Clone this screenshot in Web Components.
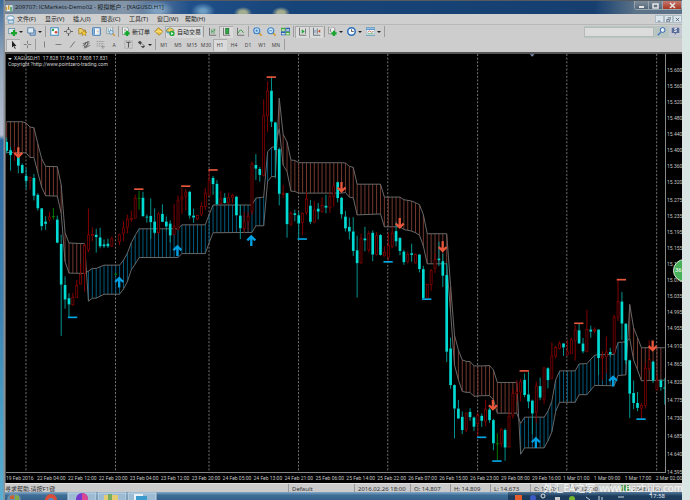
<!DOCTYPE html>
<html lang="zh-CN">
<head>
<meta charset="utf-8">
<title>ICMarkets-Demo02 - XAGUSD,H1</title>
<style>
html,body{height:100%;margin:0}
body{background:#d9e5e2;font-family:"Noto Sans","Noto Sans CJK SC",sans-serif;overflow:hidden}
</style>
</head>
<body>
<trading-desktop></trading-desktop>
<script>
const ICONS = {
app:'<rect x="1" y="3" width="9" height="8" fill="#e8f0f8"/><path d="M2 5v5M5 3v6" stroke="#c93" stroke-width="2"/><path d="M8 5v6" stroke="#3a9a4a" stroke-width="2"/>',
menuapp:'<ellipse cx="6" cy="4" rx="5" ry="3" fill="#e6f0fa" stroke="#4a88b8"/><path d="M3 7h7v4H3z" fill="#cfe2f2" stroke="#5a90b8"/>',
newchart:'<rect x="1" y="2" width="8" height="7" fill="#dfeaf2" stroke="#5f8a9a"/><path d="M8 4v8M4 8h8" stroke="#18a32a" stroke-width="3"/>',
profiles:'<path d="M4 4h7v7H4z" fill="#a9c6e4" stroke="#3d6a98"/><path d="M1 1h8v7H1z" fill="#e2ecf6" stroke="#3d6a98"/>',
market:'<rect x="1" y="1" width="10" height="10" fill="#fff" stroke="#4c93c8" stroke-width="1.5"/><circle cx="4" cy="4" r="1.6" fill="#2a9d45"/><circle cx="8" cy="7" r="1.8" fill="#d5482e"/>',
target:'<circle cx="6" cy="6" r="3" fill="none" stroke="#888" stroke-width="1.3"/><path d="M6 0v4M6 8v4M0 6h4M8 6h4" stroke="#666" stroke-width="1.6"/>',
star:'<path d="M1 2h4l1 2h4v5H1z" fill="#edd06a" stroke="#a07a22"/><path d="M8 4l1 3h3l-2.300 1.600 1 3L8 10l-2.700 1.600 1-3L4 7h3z" fill="#ffd83c" stroke="#a07a22" stroke-width=".7"/>',
panel:'<rect x="1" y="1" width="10" height="10" rx="1" fill="#fff" stroke="#3979b5" stroke-width="1.5"/><path d="M2 2h2v8H2z" fill="#5792cb"/><path d="M6 4h4M6 6h4M6 8h4" stroke="#bbb"/>',
tester:'<rect x="1" y="0" width="8" height="9" fill="#e9ede9" stroke="#8a9a9a"/><path d="M3 2v5M6 2v3" stroke="#5895c4"/><circle cx="7" cy="7" r="2.500" fill="#cfe5f5" stroke="#4887b8"/><path d="M9 9l3 3" stroke="#d29632" stroke-width="2"/>',
order:'<path d="M2 0h6l2 3v7H2z" fill="#f3f5f3" stroke="#7c8a80"/><path d="M4 3h3M4 5h3" stroke="#888"/><path d="M8 5v7M4.500 8.500h7" stroke="#12a82b" stroke-width="3"/>',
diamond:'<path d="M1 6l5-5 6 5-5 5z" fill="#efc648" stroke="#9a701c"/><path d="M2 7l4-2 5 2" fill="none" stroke="#fff0a8"/>',
auto:'<ellipse cx="5" cy="5" rx="5" ry="4" fill="#60a8cb"/><path d="M0 5l5-4 6 3-5 3z" fill="#f0cf58" stroke="#877528" stroke-width=".6"/><circle cx="8" cy="8.500" r="3.500" fill="#22a83b"/><path d="M7 6.500v4l3-2z" fill="#fff"/>',
bars:'<path d="M2 1v10h9" fill="none" stroke="#555"/><path d="M5 3v6M8 2v7M5 6h2M8 4h2" stroke="#2d9a41"/>',
candle:'<path d="M2 1v10h9" fill="none" stroke="#555"/><rect x="5" y="2" width="4" height="7" fill="#32a849" stroke="#167329"/>',
line:'<path d="M2 1v10h9" fill="none" stroke="#555"/><path d="M3 8q3-8 7 0" fill="none" stroke="#31a448" stroke-width="1.300"/>',
zoomin:'<path d="M8 8l4 4" stroke="#d5a038" stroke-width="2.500"/><circle cx="5" cy="5" r="4" fill="#d1e8fa" stroke="#3c82c4" stroke-width="1.500"/><path d="M3 5h4M5 3v4" stroke="#2872b8"/>',
zoomout:'<path d="M8 8l4 4" stroke="#d5a038" stroke-width="2.500"/><circle cx="5" cy="5" r="4" fill="#d1e8fa" stroke="#3c82c4" stroke-width="1.500"/><path d="M3 5h4" stroke="#2872b8"/>',
tiles:'<path d="M0 1h6v5H0zM6 6h6v5H6z" fill="#44a834"/><path d="M6 1h6v5H6zM0 6h6v5H0z" fill="#2b61bd"/><path d="M1 3h4v2H1zM7 3h4v2H7zM1 8h4v2H1zM7 8h4v2H7z" fill="#d9eadb"/>',
scroll:'<path d="M2 1v10h9M10 2v7" fill="none" stroke="#555"/><path d="M5 3v6l4-3z" fill="#22a83b"/>',
shift:'<path d="M2 1v10h9M7 2v7" fill="none" stroke="#456"/><path d="M11 3v5L8 5.500z" fill="#cb4d30"/><path d="M4 4v4" stroke="#47a"/>',
indicator:'<path d="M1 0h6l2 2v7H1z" fill="#eef0ee" stroke="#777"/><path d="M4 2q-2 2 0 5" stroke="#555" fill="none"/><path d="M8 5v7M4.500 8.500h7" stroke="#16a52d" stroke-width="3"/>',
clock:'<circle cx="6" cy="6" r="5" fill="#f4f9fd" stroke="#2a6fb8" stroke-width="2"/><path d="M6 3v3h3" fill="none" stroke="#333"/>',
template:'<rect x="0" y="1" width="12" height="10" fill="#edf3f8" stroke="#4c86b5"/><path d="M0 2h12v2H0z" fill="#599bd0"/><path d="M2 7l3-2 2 2 3-1" stroke="#cb5b44" fill="none"/><path d="M2 9h8" stroke="#3fa354"/>',
cursor:'<path d="M4 1v9l2-2 2 4 1-1-2-3h3z" fill="#222"/>',
cross:'<path d="M6 1v4M6 7v4M1 6h4M7 6h4" stroke="#666"/>',
vline:'<path d="M6 2v8" stroke="#666"/>',
hline:'<path d="M2 6h8" stroke="#666"/>',
trend:'<path d="M3 10l6-8" stroke="#555"/>',
channel:'<path d="M1 8l7-6M3 10l7-6M1 5l9-3M3 11l8-4M5 3l-2 7M8 3l-2 7" stroke="#555"/>',
fibo:'<path d="M1 2h10M1 5h10M1 8h7" stroke="#888" stroke-dasharray="2 1"/><path d="M9 7v5M7 9h5" stroke="#888"/>',
label:'<rect x="1" y="1" width="10" height="10" fill="none" stroke="#888" stroke-dasharray="1 1"/><path d="M3 3h6M6 3v7" stroke="#555" stroke-width="1.400"/>',
arrows:'<path d="M1 3l3-2 3 3-2 1v2L3 5z M5 8h6l-3 3z" fill="#444"/><path d="M7 5l3 3" stroke="#444"/>',
search:'<circle cx="7.500" cy="4" r="3.200" fill="#e8f2fa" stroke="#2f62b0" stroke-width="1.300"/><path d="M5 7l-4 4" stroke="#4b7abc" stroke-width="2"/>',
chat:'<path d="M1 1h10v7H7l-2 3V8H1z" fill="#596c98"/><path d="M8 2H5v2h2v2H4" fill="none" stroke="#fff"/>'
};
function build(host, css, html){
  const root = host.attachShadow({mode:'open'});
  root.innerHTML = `<style>*{box-sizing:border-box}${css}</style>${html}`;
  return root;
}
class UiIcon extends HTMLElement{
  connectedCallback(){ if(!this.shadowRoot) build(this,
    ':host{display:block;flex:none;width:9px;height:9px}svg{display:block;width:100%;height:100%}',
    `<svg viewBox="0 0 12 12" aria-hidden="true">${ICONS[this.getAttribute('name')]}</svg>`); }
}
customElements.define('ui-icon',UiIcon);

class ToolButton extends HTMLElement{
  connectedCallback(){ if(this.shadowRoot) return;
    const icon=this.getAttribute('icon'), tip=this.getAttribute('tip')||'';
    build(this,`:host{display:block;flex:none;width:14px;height:12px}
      :host([menu]){width:19px}:host([wide]){width:auto}
      button{width:100%;height:100%;display:flex;align-items:center;justify-content:center;gap:2px;padding:0 1px;border:0;background:none;font:6px/10px "Noto Sans","Noto Sans CJK SC",sans-serif;color:#222;white-space:nowrap}
      :host([tf]) button{font-size:5px;color:#444}
      :host([on]) button{background:#dadada;box-shadow:inset 1px 1px #aaa}
      i{border:2px solid transparent;border-top-color:#222;border-bottom:0}`,
      `<button type="button" title="${tip}" aria-label="${tip}">${icon?`<ui-icon name="${icon}"></ui-icon>`:''}<slot></slot>${this.hasAttribute('menu')?'<i></i>':''}</button>`);
    if(!tip){ this.shadowRoot.querySelector('button').removeAttribute('aria-label'); }
  }
}
customElements.define('tool-button',ToolButton);

class ToolBar extends HTMLElement{
  connectedCallback(){ if(!this.shadowRoot) build(this,
    `:host{display:flex;flex:none;height:13px;align-items:center;background:#cdcdcd;padding-left:1px}
     ::slotted(hr){width:1px;height:11px;margin:0 1px;border:0;background:#9b9b9b}`,'<slot></slot>'); }
}
customElements.define('tool-bar',ToolBar);

class TitleBar extends HTMLElement{
  connectedCallback(){ build(this,
    `:host{display:flex;flex:none;height:14px;align-items:flex-start;color:#101820;border-top:1px solid #565b62;
      background:radial-gradient(ellipse 9px 6px at 238px 12px,#a3ac8e 40%,transparent),radial-gradient(ellipse 9px 6px at 276px 12px,#a3ac8e 40%,transparent),
      radial-gradient(ellipse 12px 8px at 198px 10px,#6d9fc4 20%,transparent),radial-gradient(ellipse 16px 9px at 153px 9px,#7da0c0 30%,transparent),
      linear-gradient(90deg,#72849a,#8395a9 120px,#20508a 185px,#174478 290px,#163f70 590px,#5b7288 630px,#5b7288)}
     ui-icon{margin:2px 1px 0 0}
     h1{margin:0;padding-top:1px;font:6px/10px "Open Sans","Noto Sans CJK SC",sans-serif;flex:1;white-space:nowrap}
     .win{display:flex;height:9px;border:1px solid #97a5b0;border-top:0;border-radius:0 0 3px 3px}
     .win button{width:14px;border:0;border-right:1px solid #97a5b0;padding:0;background:linear-gradient(#7e8d9b,#536678);display:grid;place-items:center}
     .win button:last-child{width:18px;background:linear-gradient(#c57a70,#a8341f);border:0}
     svg{width:7px;height:7px;fill:none;stroke:#e6e6e6;stroke-width:1.500}`,
    `<ui-icon name="app"></ui-icon><h1>209707: ICMarkets-Demo02 - 模拟帐户 - [XAGUSD,H1]</h1>
     <div class="win"><button aria-label="最小化"><svg viewBox="0 0 7 7"><path d="M1 5h5" stroke-width="2"/></svg></button><button aria-label="还原"><svg viewBox="0 0 7 7"><path d="M1 2h5v4H1z"/></svg></button><button aria-label="关闭"><svg viewBox="0 0 7 7"><path d="M1 1l5 5M6 1L1 6"/></svg></button></div>`); }
}
customElements.define('title-bar',TitleBar);

class MenuBar extends HTMLElement{
  connectedCallback(){ build(this,
    `:host{display:flex;flex:none;height:11px;align-items:center;background:#cfcfcf;border-bottom:1px solid #b5b9b8;padding-left:1px}
     nav{display:flex;flex:1;padding-left:2px}
     nav button{width:28px;border:0;background:none;padding:0;font:6px/9px "Noto Sans","Noto Sans CJK SC",sans-serif;color:#222;white-space:nowrap;text-align:left}
     .c button{width:9px;height:8px;padding:0;border:1px solid #aebcc8;background:#dce5ec;display:grid;place-items:center}
     .c{display:flex}svg{width:5px;height:5px;fill:none;stroke:#4c5f72}`,
    `<ui-icon name="menuapp"></ui-icon><nav>${['文件(F)','显示(V)','插入(I)','图表(C)','工具(T)','窗口(W)','帮助(H)'].map(t=>`<button type="button">${t}</button>`).join('')}</nav>
     <div class="c"><button aria-label="最小化图表"><svg viewBox="0 0 6 6"><path d="M1 5h3"/></svg></button><button aria-label="还原图表"><svg viewBox="0 0 6 6"><path d="M1 3h3v3H1zM2 1h4v3"/></svg></button><button aria-label="关闭图表"><svg viewBox="0 0 6 6"><path d="M1 1l4 4M5 1L1 5"/></svg></button></div>`); }
}
customElements.define('menu-bar',MenuBar);

class SymbolSearch extends HTMLElement{
  connectedCallback(){ build(this,
    `:host{display:flex;align-items:center;margin-left:auto;gap:2px;background:#b9c5c0;height:12px}
     input{width:70px;height:10px;border:1px solid #b3bcb9;background:#dcdcdc;padding:0 2px;font-size:6px}
     button{border:0;background:none;padding:0 1px}
     button:last-child{background:#c7c9d2;padding:1px 2px}`,
    `<input type="search" aria-label="搜索"><button aria-label="开始搜索"><ui-icon name="search"></ui-icon></button><button aria-label="聊天"><ui-icon name="chat"></ui-icon></button>`); }
}
customElements.define('symbol-search',SymbolSearch);

/* Chart units are a third of a pixel. Each candle: kind, high, body top, body bottom, low.
   d = falling, u = rising, g = doji. Every block has a first index and a vertical base. */
const CANDLES = [
[0,300,`d 112 125 152 160|d 140 150 165 212|u 140 152 158 183|d 150 165 197 220|d 190 195 219 221|d 205 228 243 268|u 230 232 242 270|d 222 234 288 302|d 280 285 326 333|d 325 326 380 393|d 350 366 373 391|u 337 352 360 366|g 325 349 351 360|d 348 360 430 432|d 406 434 557 712|d 532 558 602 630|d 583 598 617 655|u 582 596 618 621|u 543 560 596 598|u 493 526 555 556|u 433 439 524 578|u 327 407 452 458|u 383 405 409 426|d 388 406 413 460|d 385 414 441 447|d 420 435 441 446|d 418 433 441 446|u 412 418 440 443|g 523 524 527 528|u 403 406 426 438|u 364 385 402 425|u 345 359 383 402|u 333 357 359 368|u 285 296 356 357|g 273 294 297 330|d 276 294 350 351|d 345 351 354 369|d 296 349 368 418|d 326 366 400 405|u 337 343 400 403|d 314 343 367 368|d 351 366 381 393`],
[42,180,`d 482 492 528 550|u 433 500 525 527|u 407 423 510 512|u 385 412 418 463|u 388 397 410 453|d 393 396 468 477|d 447 468 474 490|u 466 468 478 482|u 427 440 465 470|u 384 400 440 452|u 333 361 407 409|d 348 354 373 405|d 361 372 434 436|u 393 418 432 434|d 400 414 430 432|u 399 414 430 432|u 402 407 413 430|d 408 411 467 468|d 436 468 506 539|u 457 487 508 520|u 458 470 486 515|u 304 312 455 465|d 282 315 326 360|d 321 327 345 365|u 116 166 347 350|u 62 91 166 215|d 47 90 184 200|d 184 186 270 355|d 262 267 402 437|u 375 400 404 414|d 399 400 494 535|u 454 462 494 500|d 450 461 466 485|d 456 467 492 537|u 459 461 489 528|u 397 418 459 465|d 421 438 487 494|u 424 451 488 491|d 430 447 456 480|u 412 438 456 460|d 405 438 444 461|u 397 411 443 460|u 365 378 410 440`],
[85,420,`d 125 127 175 188|d 171 174 224 237|d 214 231 267 276|d 234 262 276 300|d 233 276 335 350|d 289 333 372 476|u 283 298 371 374|d 262 297 303 336|u 275 283 332 340|d 273 280 346 366|u 278 289 346 349|d 284 287 347 349|u 321 339 350 351|u 281 319 354 366|u 262 281 321 327|d 248 275 306 321|d 293 296 335 348|d 332 337 369 377|u 337 346 367 373|d 313 342 347 368|u 343 346 371 373|d 344 346 390 400|d 380 390 478 480|u 434 436 478 482|u 390 394 436 456|u 342 360 388 402|d 307 358 363 381|d 343 366 410 444|d 372 408 640 671|d 597 630 741 752|d 739 741 812 902|d 786 812 842 844|d 821 837 877 889|u 824 826 877 884|d 811 822 838 849|d 836 839 867 880|u 824 833 858 900|d 827 834 849 868|u 786 814 850 866`],
[124,780,`d 450 455 487 495|d 483 487 557 578|g 527 557 559 610|u 511 515 558 569|d 512 517 570 610|u 460 475 568 570|u 392 407 474 482|u 366 401 407 431|u 362 371 402 430|d 346 365 411 418|d 340 409 431 451|d 425 428 467 530|u 370 384 463 496|d 358 384 419 427|u 327 329 425 438|d 327 330 366 391|u 252 292 361 364|u 262 267 293 300|u 248 256 270 273|d 254 255 267 293|u 245 280 289 292|u 238 244 285 287|u 200 214 246 307|d 196 215 255 256|d 238 255 279 285|u 153 213 280 282|d 201 213 219 238|u 206 213 217 224|d 212 213 299 350|u 278 294 299 365|u 234 281 294 345|d 268 281 287 295|u 168 175 284 286|u 62 128 176 187|d 99 128 195 244|d 194 195 306 317|d 304 306 407 481|d 367 405 435 454|d 402 435 450 460|u 435 442 451 484|u 313 330 443 452|u 246 304 332 335|d 307 310 367 375|u 350 366 395 397|d 362 367 387 398|d 360 388 392 440`]];
/* Channel knots: index, outer line, inner line. The outer line lies above the inner one while the trend is down. */
const CHANNEL = [
[300,'0 64 157|4 64 158|5 68 158|6 80 172|7 82 172|8 130 218|9 176 262|10 199 288|13 200 289|14 255 340|15 400 487|16 431 522|20 433 523|21 607 516|22 598 508|23 598 508|25 586 498|29 586 498|30 570 483|31 548 462|32 512 430|33 495 408|34 475 388|43 475 388'],
[180,'44 595 508|45 583 496|51 583 496|52 550 465|53 520 436|63 519 436|64 499 415|66 499 412|67 365 275|68 350 262|69 350 259|70 113 205|71 222 315|72 245 335|73 300 394|74 301 395|75 308 400|86 308 400'],
[420,'87 69 158|88 79 172|89 82 174|90 133 226|96 133 223|97 172 262|101 172 262|102 180 270|104 184 275|105 189 280|106 195 287|107 225 320|108 283 374|113 283 374|114 440 520|115 590 680|116 635 725|117 665 760|118 669 763|119 670 763|120 683 775|122 683 773'],
[780,'124 322 413|125 335 425|126 373 466|131 373 466|132 590 497|133 571 478|138 571 478|139 550 460|140 523 430|141 460 365|142 433 338|146 433 338|147 410 317|149 410 316|151 382 290|156 383 288|157 352 252|159 350 250|160 137 240|161 208 305|162 237 335|163 268 368|169 268 366']];
const STEP=11.7, X0=20, px=i=>X0+STEP*i;

function plotMarkup(){
  const knots=CHANNEL.flatMap(([b,s])=>s.split('|').map(k=>{const[i,a,c]=k.split(' ').map(Number);return[i,a+b,c+b];}));
  let out='';
  for(const x of [78,347,628,897,1165,1435,1703,1973]) out+=`<path class="grid" d="M${x} 159V1425"/>`;
  for(let n=0;n<knots.length-1;n++){
    const[p,a,b]=knots[n],[q,c,d]=knots[n+1];
    for(let i=p;i<q;i++){const t=(i-p)/(q-p),y1=a+(c-a)*t,y2=b+(d-b)*t;
      out+=`<path class="${y1<y2?'hr':'hb'}" d="M${px(i)} ${y1}V${y2}"/>`;}
  }
  for(const k of [1,2]) out+=`<polyline class="edge" points="${knots.map(n=>px(n[0])+','+n[k]).join(' ')}"/>`;
  for(const[start,b,s] of CANDLES) s.split('|').forEach((row,n)=>{
    const[k,...v]=row.split(' '),[h,t,u,l]=v.map(y=>+y+b),x=px(start+n);
    out+=`<path class="${k}w" d="M${x} ${h}V${t}M${x} ${u}V${l}"/><rect class="${k}" x="${x-(k==='u'?3:4)}" y="${t}" width="${k==='u'?6:8}" height="${Math.max(3,u-t)}"/>`;
  });
  const dash=(c,a)=>a.forEach(([x,y])=>out+=`<path d="M${x-14} ${y}h28" stroke="${c}" stroke-width="5"/>`);
  dash('#e8573c',[[417,568],[558,559],[640,510],[815,229],[1575,1118],[1739,974],[1867,842]]);
  dash('#00a8e6',[[218,956],[908,719],[1166,788],[1282,901],[1447,1319],[1493,1391],[1926,1264]]);
  for(const[x,y] of [[55,458],[1026,563],[1201,672],[1330,743],[1481,1222],[1961,1043]])
    out+=`<path class="arrow" stroke="#e8573c" d="M${x} ${y-17}v30m-12-13l12 12l12-12"/>`;
  for(const[x,y] of [[358,849],[533,753],[755,723],[1610,1334],[1842,1148]])
    out+=`<path class="arrow" stroke="#00a0e0" d="M${x} ${y+17}v-30m-12 13l12-12l12 12"/>`;
  out+='<path class="shiftmark" d="M1592 160h14l-7 7z"/>';
  return out;
}
class PriceChart extends HTMLElement{
  connectedCallback(){
    const prices='15.600 15.560 15.520 15.480 15.440 15.400 15.360 15.320 15.275 15.235 15.195 15.155 15.115 15.075 15.035 14.995 14.955 14.910 14.865 14.820 14.775 14.730 14.685 14.640 14.595'.split(' ');
    const tall=new Set(['15.275','14.910','14.865','14.820','14.775','14.730','14.685','14.640','14.595']);
    const times=['19 Feb 2016','22 Feb 04:00','22 Feb 12:00','22 Feb 20:00','23 Feb 04:00','23 Feb 12:00','23 Feb 20:00','24 Feb 05:00','24 Feb 13:00','24 Feb 21:00','25 Feb 06:00','25 Feb 14:00','25 Feb 22:00','26 Feb 07:00','26 Feb 15:00','26 Feb 23:00','29 Feb 08:00','29 Feb 16:00','1 Mar 01:00','1 Mar 09:00','1 Mar 17:00','2 Mar 02:00'];
    build(this,
    `:host{display:grid;flex:1;min-height:0;grid-template:minmax(0,1fr) 10px/minmax(0,1fr) 16px;background:#000;color:#c4c4c4;border-top:2px solid #555;border-left:1px solid #555;overflow:hidden;font:5px/8px Roboto,sans-serif}
     .plot{position:relative;border-right:1px solid #888;border-bottom:1px solid #888;min-width:0}
     svg{display:block;width:100%;height:100%}
     header{position:absolute;left:2px;top:1px;line-height:6px;white-space:nowrap;color:#d0d0d0}
     header p{margin:0}
     header i{display:inline-block;margin-right:2px;border:2px solid transparent;border-top-color:#ddd;border-bottom:0}
     .prices{grid-area:1/2/3/3;display:flex;flex-direction:column;padding-top:8px;overflow:hidden}
     .prices span{flex:none;display:flex;align-items:flex-end;height:16px;line-height:8px}
     .prices span:first-child{height:12px}
     .prices .t{height:18px}
     .prices span::before{content:"";width:2px;height:1px;margin:0 1px 4px 0;background:#999}
     .times{grid-area:2/1/3/3;display:grid;grid-template-columns:repeat(21,minmax(0,33fr)) minmax(0,28fr);overflow:hidden}
     .times span{padding-top:1px;white-space:nowrap}
     path,polyline{fill:none}
     .shiftmark{fill:#7f93b5}
     .grid{stroke:#777;stroke-width:3;stroke-dasharray:6 5}
     .hr{stroke:#74392f;stroke-width:3}.hb{stroke:#005c80;stroke-width:3}
     .edge{stroke:#696969;stroke-width:3}
     .dw{stroke:#009590;stroke-width:3}.d{fill:#00dcd4}
     .uw{stroke:#850000;stroke-width:3}.u{fill:#080000;stroke:#980000;stroke-width:2}
     .gw{stroke:#007a00;stroke-width:3}.g{fill:#009000}
     .arrow{stroke-width:7}`,
    `<div class="plot"><svg viewBox="18 159 1980 1265" preserveAspectRatio="none" role="img" aria-label="XAGUSD H1">${plotMarkup()}</svg>
      <header><p><i></i>XAGUSD,H1&nbsp; 17.828 17.843 17.808 17.831</p><p>Copyright ?http://www.pointzero-trading.com</p></header></div>
     <div class="prices">${prices.map(p=>`<span${tall.has(p)?' class="t"':''}>${p}</span>`).join('')}</div>
     <div class="times">${times.map(t=>`<span>${t}</span>`).join('')}</div>`);
  }
}
customElements.define('price-chart',PriceChart);

class StatusBar extends HTMLElement{
  connectedCallback(){ build(this,
    `:host{display:flex;flex:none;height:9px;background:#cbcbcb;border-top:1px solid #e0e0e0;color:#333;font:6px/10px "Noto Sans","Noto Sans CJK SC",sans-serif;white-space:nowrap;overflow:hidden}
     span{flex:none;width:40px;height:9px;padding-left:3px;border-left:1px solid #999}
     .hint{flex:1;border:0;padding-left:0}
     .name{width:66px}.date{width:56px}.net{width:72px;padding-left:10px}.net::before{content:"";display:inline-block;width:8px;height:6px;margin-right:4px;background:repeating-linear-gradient(90deg,#4a9a4a 0 2px,transparent 2px 3px)}`,
    `<span class="hint">寻求帮助,请按F1键</span><span class="name">Default</span><span class="date">2016.02.26 18:00</span><span>O: 14.807</span><span>H: 14.809</span><span>L: 14.673</span><span>C: 14.701</span><span>V: 12760</span><span class="net">2348/1 kb</span>`); }
}
customElements.define('status-bar',StatusBar);

class TaskBar extends HTMLElement{
  connectedCallback(){ build(this,
    `:host{display:flex;flex:none;height:8px;align-items:flex-start;background:linear-gradient(#85aac8,#3d6d96 40%,#35628b);color:#e4edf5;overflow:hidden}
     svg{flex:1;height:8px;min-width:0}time{font:6px/8px "Noto Sans",sans-serif;padding:0 17px 0 2px;height:8px}
     .tray{background:linear-gradient(#52789a,#1d3c5c 50%);display:flex;width:174px;height:8px}`,
    `<svg viewBox="0 0 508 8" preserveAspectRatio="xMinYMin slice" aria-hidden="true"><circle cx="9" cy="8" r="7" fill="#6a8fa8"/><path d="M5 4l4-1v4H5z" fill="#c96035"/><path d="M10 3l4 1v4h-4z" fill="#7eaa48"/><path d="M63 1h28v8H63zM93 1h28v8H93zM123 1h28v8h-28z" fill="#9dbcd4" stroke="#c5d8e6"/><circle cx="46" cy="8" r="6" fill="#d94f3a"/><circle cx="46" cy="9" r="3" fill="#4e8ed0"/><circle cx="77" cy="7" r="6" fill="#7438cf"/><path d="M77 1a6 6 0 0 1 6 7h-6z" fill="#db4891"/><path d="M99 3h14v6H99z" fill="#e7cb72"/><path d="M103 2h4v6h-4z" fill="#74ad61"/><path d="M129 2h9v6h-9z" fill="#e8f1f7"/><path d="M131 4h11v4h-11z" fill="#3a9bcc"/></svg>
     <div class="tray"><svg viewBox="0 0 140 8" preserveAspectRatio="xMinYMin slice" aria-hidden="true"><path d="M7 3h7v5H7z" fill="#e35d2c"/><circle cx="25" cy="6" r="3" fill="#3c58c6"/><circle cx="35" cy="4" r="2" fill="none" stroke="#ddd"/><path d="M47 5h5v3h-5z" fill="#ccc"/><circle cx="64" cy="7" r="3" fill="#72b52e"/><path d="M78 5l4 3M91 4v4M94 5v3M110 5h6" stroke="#c8d4de"/></svg><time>17:58</time></div>`); }
}
customElements.define('task-bar',TaskBar);

class TradingDesktop extends HTMLElement{
  connectedCallback(){
    const b=(icon,tip,x='')=>`<tool-button icon="${icon}" tip="${tip}" ${x}></tool-button>`;
    build(this,
    `:host{display:flex;height:100vh;position:relative;padding-right:8px;overflow:hidden}
     .edge{flex:none;width:5px;background:linear-gradient(90deg,transparent 3px,#8a9096 4px),linear-gradient(#3b6b9c,#96a8bc 12%,#b5bdd0 27%,#2c67a0 28%,#3b7fb0 60%,#4aa0c8 85%,#5caed0)}
     main{flex:1;min-width:0;display:flex;flex-direction:column;position:relative;overflow:hidden}
     .fill{flex:none;height:1px;background:#cdcdcd}
     .pct{position:absolute;right:-14px;top:259px;width:23px;height:23px;border:1px solid #d7e8d9;border-radius:50%;background:#48b058;color:#fff;font:6px/20px Roboto,sans-serif;padding-left:1px}
     .mark{position:absolute;right:7px;bottom:7px;display:flex;gap:4px;color:#f4f8f8;font:10px/10px "Open Sans","Noto Sans CJK SC",sans-serif;white-space:nowrap}`,
    `<div class="edge"></div><main><title-bar></title-bar><menu-bar></menu-bar>
     <tool-bar>${b('newchart','新图表','menu')}${b('profiles','配置文件','menu')}<hr>${b('market','市场报价')}${b('target','数据窗口')}${b('star','导航')}${b('panel','终端')}${b('tester','策略测试')}<hr><tool-button icon="order" wide>新订单</tool-button>${b('diamond','编辑器')}<tool-button icon="auto" wide on>自动交易</tool-button><hr>${b('bars','柱状图')}${b('candle','阴阳烛','on')}${b('line','折线图')}<hr>${b('zoomin','放大')}${b('zoomout','缩小')}${b('tiles','平铺')}<hr>${b('scroll','自动滚动','on')}${b('shift','图表平移','on')}<hr>${b('indicator','指标','menu')}${b('clock','时间周期','menu')}${b('template','模板','menu')}<hr><symbol-search></symbol-search></tool-bar>
     <tool-bar>${b('cursor','光标','on')}${b('cross','十字准线')}<hr>${b('vline','垂直线')}${b('hline','水平线')}${b('trend','趋势线')}${b('channel','通道')}${b('fibo','斐波纳契')}<tool-button tf>A</tool-button>${b('label','文字标签')}${b('arrows','箭头','menu')}<hr>${['M1','M5','M15','M30','H1','H4','D1','W1','MN'].map(t=>`<tool-button tf ${t==='H1'?'on':''}>${t}</tool-button>`).join('')}<hr></tool-bar>
     <div class="fill"></div><price-chart></price-chart><status-bar></status-bar><task-bar></task-bar><div class="pct">36</div></main>
     <div class="mark"><span>外汇EA之家</span><span>www.eazhijia.com</span></div>`);
  }
}
customElements.define('trading-desktop',TradingDesktop);
</script>
</body>
</html>
